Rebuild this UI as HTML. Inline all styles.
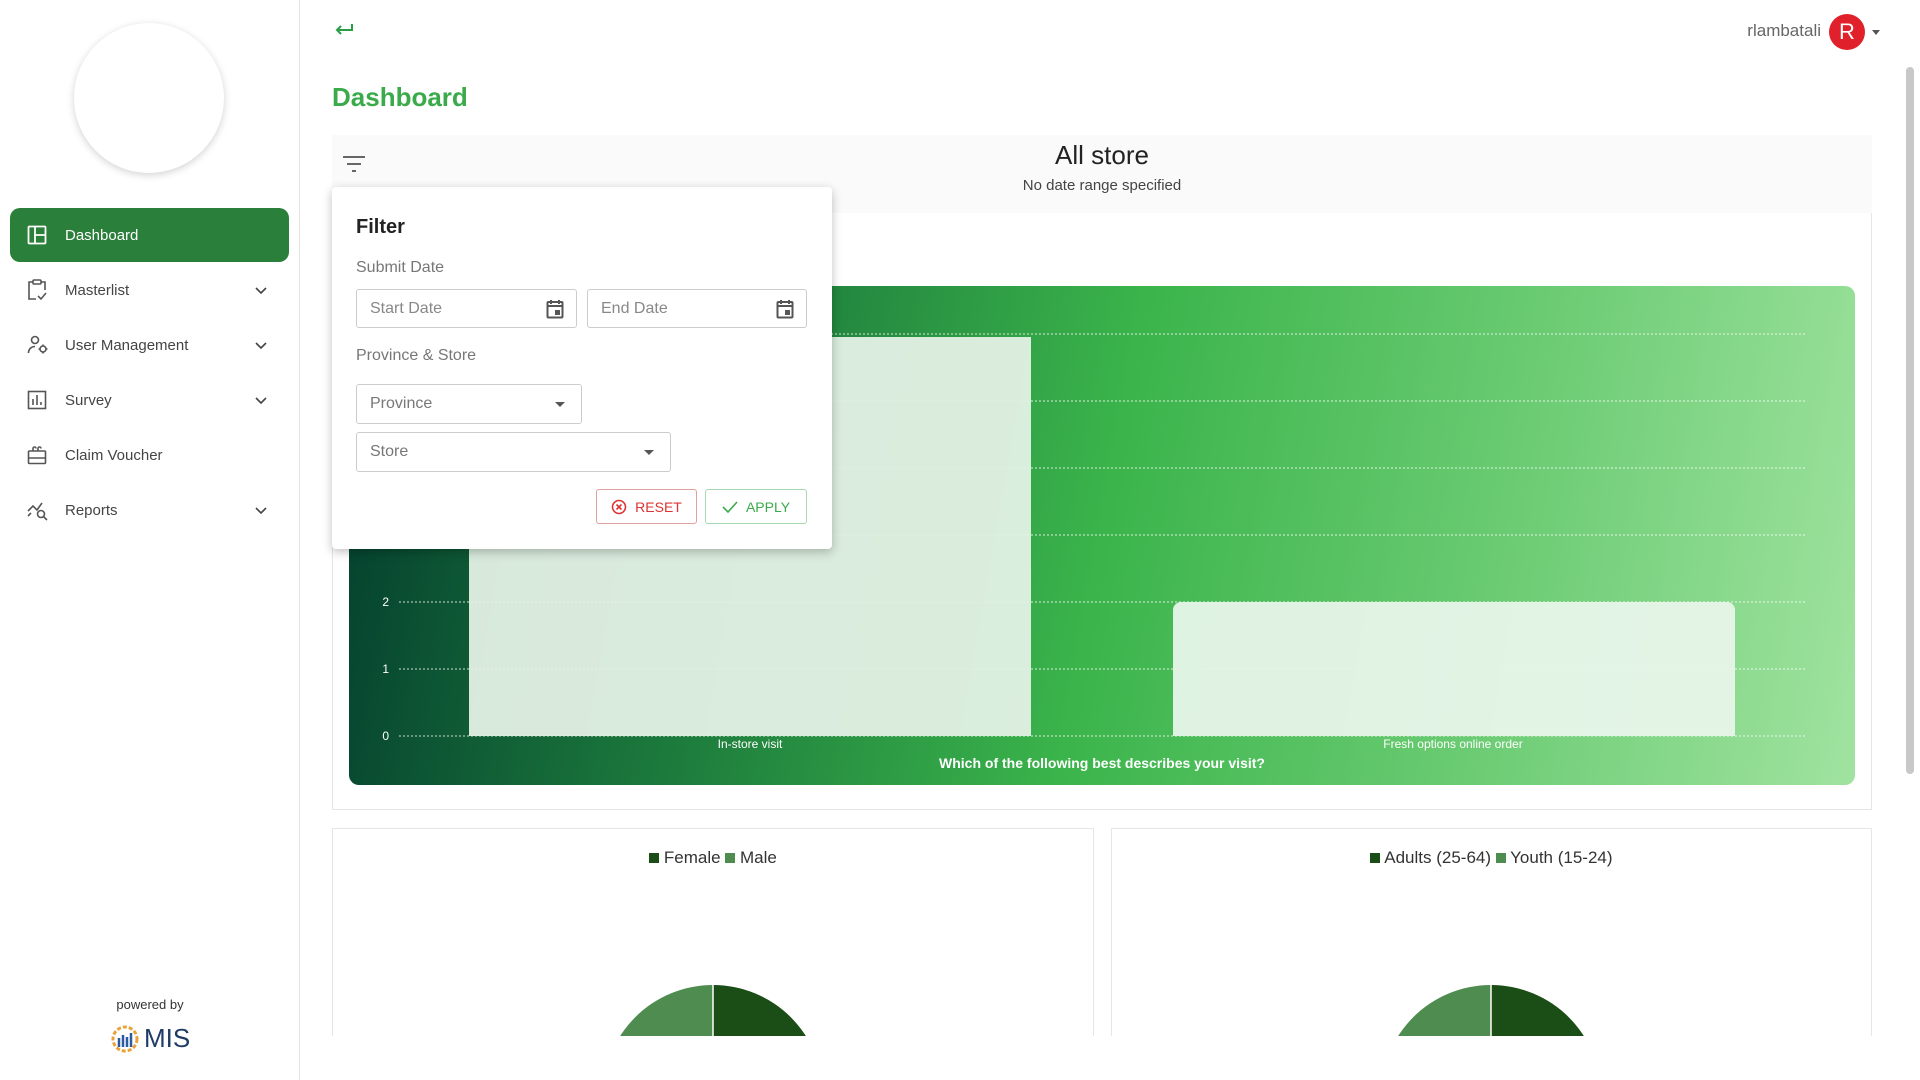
<!DOCTYPE html>
<html><head><meta charset="utf-8"><style>
*{box-sizing:border-box;margin:0;padding:0}
body{width:1920px;height:1080px;overflow:hidden;background:#fff;font-family:"Liberation Sans",sans-serif;position:relative;color:#333}
.abs{position:absolute}
.side{left:0;top:0;width:300px;height:1080px;border-right:1px solid #e6e6e6;background:#fff}
.logo{left:74px;top:23px;width:150px;height:150px;border-radius:50%;background:#fff;box-shadow:0 2px 8px rgba(0,0,0,.18)}
.item{left:10px;width:279px;height:54px;border-radius:10px;display:flex;align-items:center;font-size:15px;color:#444}
.item .t{position:absolute;left:55px}
.item svg{position:absolute;left:17px}
.item .chev{position:absolute;left:244px}
.active{background:#2a7f3a;color:#fff}
.main{left:300px;top:0;width:1620px;height:1036px;overflow:hidden}
</style></head><body>
<div class="abs side">
 <div class="abs logo"></div>
 <div class="abs item active" style="top:208px"><svg width="20" height="20" viewBox="0 0 20 20" fill="none" stroke="#fff" stroke-width="1.8"><rect x="1.5" y="1.5" width="17" height="17" rx="1"/><path d="M8 1.5v17M8 10h10.5"/></svg><span class="t">Dashboard</span></div>
 <div class="abs item" style="top:263px"><svg width="20" height="22" viewBox="0 0 20 22" fill="none" stroke="#555" stroke-width="1.6"><path d="M6 3H2v17h7M14 3h4v8"/><rect x="6" y="1" width="8" height="4" rx="1"/><path d="M11 17l3 3 5-6"/></svg><span class="t">Masterlist</span><svg class="chev" width="14" height="14" viewBox="0 0 14 14" fill="none" stroke="#444" stroke-width="1.6"><path d="M2 5l5 5 5-5"/></svg></div>
 <div class="abs item" style="top:318px"><svg width="22" height="20" viewBox="0 0 22 20" fill="none" stroke="#555" stroke-width="1.6"><circle cx="8" cy="5" r="3.5"/><path d="M1.5 18c0-4 3-6.5 6.5-6.5"/><circle cx="16" cy="14" r="3"/><path d="M16 9.5v1.5M16 17v1.5M11.5 14H13M19 14h1.5"/></svg><span class="t">User Management</span><svg class="chev" width="14" height="14" viewBox="0 0 14 14" fill="none" stroke="#444" stroke-width="1.6"><path d="M2 5l5 5 5-5"/></svg></div>
 <div class="abs item" style="top:373px"><svg width="20" height="20" viewBox="0 0 20 20" fill="none" stroke="#555" stroke-width="1.6"><rect x="1.5" y="1.5" width="17" height="17"/><path d="M6 15V9M10 15V5M14 15v-3"/></svg><span class="t">Survey</span><svg class="chev" width="14" height="14" viewBox="0 0 14 14" fill="none" stroke="#444" stroke-width="1.6"><path d="M2 5l5 5 5-5"/></svg></div>
 <div class="abs item" style="top:428px"><svg width="20" height="20" viewBox="0 0 20 20" fill="none" stroke="#555" stroke-width="1.6"><rect x="1.5" y="6" width="17" height="12.5" rx="1"/><path d="M1.5 13h17M6 6V3.5a1.5 1.5 0 013 0M11 6V3.5a1.5 1.5 0 013 0"/></svg><span class="t">Claim Voucher</span></div>
 <div class="abs item" style="top:483px"><svg width="22" height="22" viewBox="0 0 22 22" fill="none" stroke="#555" stroke-width="1.6"><path d="M1 12l5-5 4 4 5-7"/><circle cx="14" cy="15" r="3.5"/><path d="M16.5 17.5L20 21M1 17l3-3"/></svg><span class="t">Reports</span><svg class="chev" width="14" height="14" viewBox="0 0 14 14" fill="none" stroke="#444" stroke-width="1.6"><path d="M2 5l5 5 5-5"/></svg></div>
 <div class="abs" style="left:0;width:300px;top:997px;text-align:center;font-size:13px;color:#333">powered by</div>
 <div class="abs" style="left:110px;top:1023px;display:flex;align-items:center;gap:4px"><svg width="30" height="28" viewBox="0 0 30 28"><circle cx="15" cy="14" r="12" fill="none" stroke="#e8a33a" stroke-width="3" stroke-dasharray="4 2"/><path d="M9 22V13M13 22V10M17 22V12M21 22V8" stroke="#2c5aa0" stroke-width="2.5"/></svg><span style="font-size:26px;color:#1f3b66">MIS</span></div>
</div>
<div class="abs main">
 <svg class="abs" style="left:34px;top:22px" width="20" height="16" viewBox="0 0 20 16" fill="none" stroke="#2a9d47" stroke-width="2"><path d="M18 2v6H3M7 4L3 8l4 4"/></svg>
 <div class="abs" style="left:32px;top:82px;font-size:26px;font-weight:bold;color:#3aaa4a">Dashboard</div>
 <div class="abs" style="right:99px;top:21px;font-size:17px;color:#666">rlambatali</div>
 <div class="abs" style="left:1529px;top:14px;width:36px;height:36px;border-radius:50%;background:#e0202a;color:#fff;font-size:22px;text-align:center;line-height:36px">R</div>
 <div class="abs" style="left:1572px;top:30px;border:4px solid transparent;border-top:5px solid #555"></div>
 <div class="abs" style="left:1606px;top:67px;width:8px;height:707px;border-radius:4px;background:#c8c8c8"></div>
 <div class="abs" style="left:32px;top:135px;width:1540px;height:78px;background:#fafafa"></div>
 <svg class="abs" style="left:42px;top:155px" width="24" height="18" viewBox="0 0 24 18" stroke="#666" stroke-width="2"><path d="M1 2h22M5 9h14M10 16h4"/></svg>
 <div class="abs" style="left:32px;width:1540px;top:140px;text-align:center;font-size:26px;color:#222">All store</div>
 <div class="abs" style="left:32px;width:1540px;top:177px;text-align:center;font-size:15px;color:#444">No date range specified</div>
 <div class="abs" style="left:32px;top:213px;width:1540px;height:597px;border:1px solid #e6e6e6;border-top:none"></div>
 <div class="abs" style="left:49px;top:286px;width:1506px;height:499px;border-radius:10px;background:linear-gradient(100deg,#033d2e 0%,#1c7a3c 25%,#3bb44b 50%,#6acb72 75%,#a0e3a0 100%)">
  <svg class="abs" style="left:0;top:0" width="1506" height="499">
   <g stroke="#fff" stroke-opacity=".8" stroke-dasharray="2 2" stroke-width="1">
    <line x1="50" x2="1456" y1="48" y2="48"/><line x1="50" x2="1456" y1="115" y2="115"/><line x1="50" x2="1456" y1="182" y2="182"/><line x1="50" x2="1456" y1="249" y2="249"/><line x1="50" x2="1456" y1="316" y2="316"/><line x1="50" x2="1456" y1="383" y2="383"/><line x1="50" x2="1456" y1="450" y2="450"/>
   </g>
   <rect x="120" y="51" width="562" height="399" fill="#e4f1e6" fill-opacity=".95"/>
   <path d="M824 450V324a8 8 0 018-8h546a8 8 0 018 8v126z" fill="#e8f6ea" fill-opacity=".95"/>
   <g fill="#fff" font-family="Liberation Sans" font-size="12">
    <text x="40" y="454" text-anchor="end">0</text><text x="40" y="387" text-anchor="end">1</text><text x="40" y="320" text-anchor="end">2</text>
    <text x="401" y="462" text-anchor="middle">In-store visit</text><text x="1104" y="462" text-anchor="middle">Fresh options online order</text>
    <text x="753" y="482" text-anchor="middle" font-weight="bold" font-size="14">Which of the following best describes your visit?</text>
   </g>
  </svg>
 </div>
 <div class="abs" style="left:32px;top:828px;width:762px;height:230px;border:1px solid #e6e6e6"></div>
 <div class="abs" style="left:811px;top:828px;width:761px;height:230px;border:1px solid #e6e6e6"></div>
 <div class="abs" style="left:32px;width:762px;top:848px;text-align:center;font-size:17px;color:#333"><span style="display:inline-block;width:10px;height:10px;background:#1b4d17"></span> Female <span style="display:inline-block;width:10px;height:10px;background:#4f8c4f"></span> Male</div>
 <div class="abs" style="left:811px;width:761px;top:848px;text-align:center;font-size:17px;color:#333"><span style="display:inline-block;width:10px;height:10px;background:#1b4d17"></span> Adults (25-64) <span style="display:inline-block;width:10px;height:10px;background:#4f8c4f"></span> Youth (15-24)</div>
 <svg class="abs" style="left:303px;top:985px" width="220" height="60"><path d="M110 0A110 110 0 000 110h110z" fill="#4f8c4f"/><path d="M110 0A110 110 0 01220 110H110z" fill="#1b4d17"/><line x1="110" y1="0" x2="110" y2="60" stroke="#fff" stroke-width="1.5"/></svg>
 <svg class="abs" style="left:1081px;top:985px" width="220" height="60"><path d="M110 0A110 110 0 000 110h110z" fill="#4f8c4f"/><path d="M110 0A110 110 0 01220 110H110z" fill="#1b4d17"/><line x1="110" y1="0" x2="110" y2="60" stroke="#fff" stroke-width="1.5"/></svg>
 <div class="abs" style="left:32px;top:187px;width:500px;height:362px;background:#fff;border-radius:4px;box-shadow:0 3px 10px rgba(0,0,0,.25)">
  <div class="abs" style="left:24px;top:29px;font-size:20px;font-weight:bold;color:#222">Filter</div>
  <div class="abs" style="left:24px;top:72px;font-size:16px;color:#777">Submit Date</div>
  <div class="abs" style="left:24px;top:102px;width:221px;height:39px;border:1px solid #ccc;border-radius:3px;font-size:16px;color:#888;padding:10px 13px">Start Date</div>
  <div class="abs" style="left:255px;top:102px;width:220px;height:39px;border:1px solid #ccc;border-radius:3px;font-size:16px;color:#888;padding:10px 13px">End Date</div>
  <svg class="abs" style="left:214px;top:112px" width="18" height="20" viewBox="0 0 18 20" fill="none" stroke="#555" stroke-width="2"><rect x="1.5" y="3" width="15" height="15.5" rx="1"/><path d="M5 1v4M13 1v4M1.5 7h15"/><rect x="10" y="12" width="3" height="3" fill="#555"/></svg>
  <svg class="abs" style="left:444px;top:112px" width="18" height="20" viewBox="0 0 18 20" fill="none" stroke="#555" stroke-width="2"><rect x="1.5" y="3" width="15" height="15.5" rx="1"/><path d="M5 1v4M13 1v4M1.5 7h15"/><rect x="10" y="12" width="3" height="3" fill="#555"/></svg>
  <div class="abs" style="left:24px;top:160px;font-size:16px;color:#777">Province &amp; Store</div>
  <div class="abs" style="left:24px;top:197px;width:226px;height:40px;border:1px solid #ccc;border-radius:3px;font-size:16px;color:#777;padding:10px 13px">Province</div>
  <div class="abs" style="left:223px;top:215px;border:5px solid transparent;border-top:5px solid #555"></div>
  <div class="abs" style="left:24px;top:245px;width:315px;height:40px;border:1px solid #ccc;border-radius:3px;font-size:16px;color:#777;padding:10px 13px">Store</div>
  <div class="abs" style="left:312px;top:263px;border:5px solid transparent;border-top:5px solid #555"></div>
  <div class="abs" style="left:264px;top:302px;width:101px;height:35px;border:1px solid #e0a0a0;border-radius:3px;color:#d33;font-size:14px;display:flex;align-items:center;justify-content:center;gap:8px"><svg width="16" height="16" viewBox="0 0 16 16" fill="none" stroke="#d33" stroke-width="1.6"><circle cx="8" cy="8" r="6.5"/><path d="M5.5 5.5l5 5M10.5 5.5l-5 5"/></svg>RESET</div>
  <div class="abs" style="left:373px;top:302px;width:102px;height:35px;border:1px solid #a8d8b0;border-radius:3px;color:#3aaa4a;font-size:14px;display:flex;align-items:center;justify-content:center;gap:8px"><svg width="16" height="14" viewBox="0 0 16 14" fill="none" stroke="#3aaa4a" stroke-width="1.6"><path d="M1 7l5 5 9-10"/></svg>APPLY</div>
 </div>
</div>
</body></html>
